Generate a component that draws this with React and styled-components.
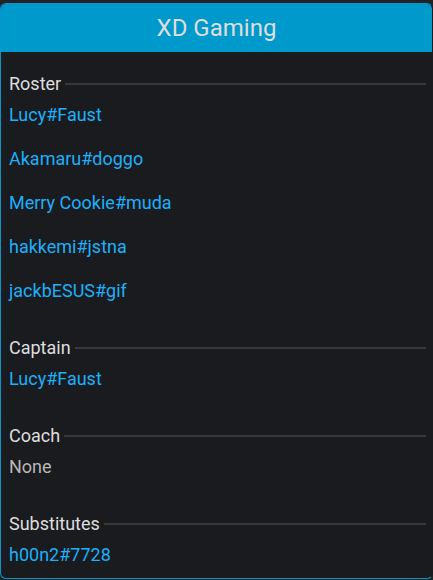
import React from 'react';
import styled, { createGlobalStyle } from 'styled-components';

const team = {
  name: 'XD Gaming',
  sections: [
    { title: 'Roster', members: ['Lucy#Faust', 'Akamaru#doggo', 'Merry Cookie#muda', 'hakkemi#jstna', 'jackbESUS#gif'] },
    { title: 'Captain', members: ['Lucy#Faust'] },
    { title: 'Coach', members: [] },
    { title: 'Substitutes', members: ['h00n2#7728'] },
  ],
};

const GlobalStyle = createGlobalStyle`
  html, body {
    margin: 0;
    padding: 0;
    background: #202225;
  }
  body {
    font-family: Roboto, "Noto Sans", "Liberation Sans", sans-serif;
    padding-top: 3px;
  }
`;

const Card = styled.div`
  box-sizing: border-box;
  width: 433px;
  border: 1px solid #0a94c9;
  border-right-color: #1a1b1e;
  border-radius: 6px;
  background: #1a1b1e;
  overflow: hidden;
`;

const Header = styled.div`
  height: 48px;
  background: #0099cc;
  color: #dedede;
  font-size: 24px;
  display: flex;
  align-items: center;
  justify-content: center;
`;

const Body = styled.div`
  padding: 19px 6px 11px 8px;
  display: flex;
  flex-direction: column;
  gap: 32px;
`;

const Section = styled.div`
  display: flex;
  flex-direction: column;
  gap: 8px;
`;

// label with a rule running to the right edge
const Label = styled.div`
  display: flex;
  align-items: center;
  gap: 4px;
  height: 24px;
  font-size: 18px;
  color: #dedede;

  &::after {
    content: '';
    flex: 1;
    height: 2px;
    background: #37383b;
    margin-top: 1px;
  }
`;

const List = styled.div`
  display: flex;
  flex-direction: column;
  gap: 20px;
`;

const Member = styled.div`
  height: 24px;
  line-height: 24px;
  font-size: 18px;
  color: ${(p) => (p.$empty ? '#b8b8b8' : '#1cb0fa')};
`;

export default function App() {
  return (
    <>
      <GlobalStyle />
      <Card>
        <Header>{team.name}</Header>
        <Body>
          {team.sections.map((s) => (
            <Section key={s.title}>
              <Label>{s.title}</Label>
              <List>
                {s.members.length ? (
                  s.members.map((m) => <Member key={m}>{m}</Member>)
                ) : (
                  <Member $empty>None</Member>
                )}
              </List>
            </Section>
          ))}
        </Body>
      </Card>
    </>
  );
}
